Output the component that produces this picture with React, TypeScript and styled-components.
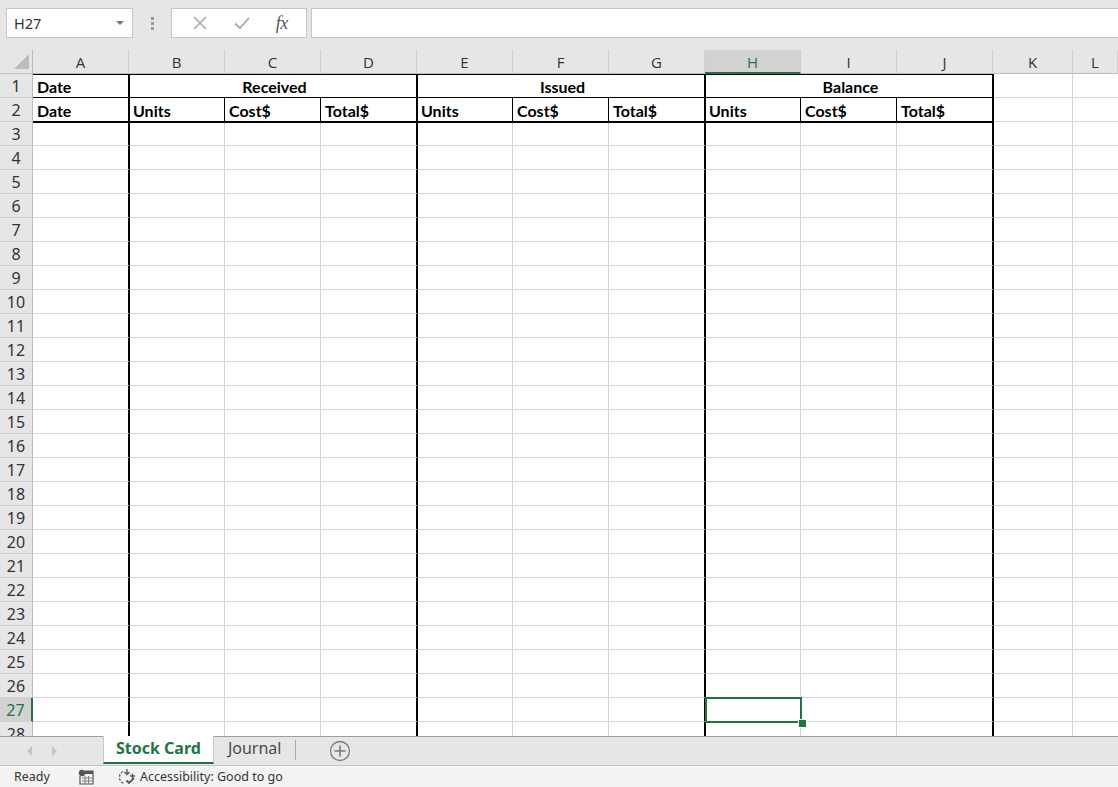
import styled, { createGlobalStyle, css } from "styled-components";

const GlobalStyle = createGlobalStyle`
    html, body {
        margin: 0;
        padding: 0;
        width: 1118px;
        height: 787px;
        overflow: hidden;
        background: #fff;
    }
    * { box-sizing: border-box; }
`;

type Edge = "g" | "b" | "t" | "n";

const edge = (e: Edge) =>
    e === "t" ? "2px solid #000" : e === "b" ? "1px solid #000" : e === "n" ? "none" : "1px solid #d4d4d4";

const COLS = ["A", "B", "C", "D", "E", "F", "G", "H", "I", "J", "K", "L"];
const THICK_AFTER = ["A", "D", "G", "J"];
const ROWS = Array.from({ length: 28 }, (_, i) => i + 1);

const Window = styled.div`
    display: flex;
    flex-direction: column;
    width: 1118px;
    height: 787px;
    font-family: "Noto Sans", "Open Sans", sans-serif;
    color: #222;
`;

const TopBar = styled.div`
    height: 50px;
    flex-shrink: 0;
    background: #e6e6e6;
    display: flex;
    align-items: flex-start;
    padding: 8px 0 0 6px;
`;

const NameBox = styled.div`
    width: 127px;
    height: 30px;
    background: #fff;
    border: 1px solid #c6c6c6;
    display: flex;
    align-items: center;
    justify-content: space-between;
    padding: 0 6px 0 7px;
    font-size: 14.5px;
    color: #333;
`;

const Caret = styled.span`
    width: 0;
    height: 0;
    border-left: 4px solid transparent;
    border-right: 4px solid transparent;
    border-top: 4px solid #777;
    margin-right: 2px;
`;

const Grip = styled.div`
    width: 38px;
    height: 30px;
    display: flex;
    flex-direction: column;
    align-items: center;
    justify-content: center;
    gap: 2px;
    span {
        width: 3px;
        height: 3px;
        background: #9a9a9a;
    }
`;

const ButtonGroup = styled.div`
    width: 136px;
    height: 30px;
    background: #fff;
    border: 1px solid #c6c6c6;
    display: flex;
    align-items: center;
    justify-content: space-around;
    padding: 0 6px 0 8px;
`;

const Fx = styled.span`
    font-family: "Liberation Serif", "DejaVu Serif", serif;
    font-style: italic;
    font-size: 18px;
    color: #555;
    letter-spacing: -0.5px;
`;

const FormulaInput = styled.div`
    flex: 1;
    height: 30px;
    margin-left: 4px;
    background: #fff;
    border: 1px solid #c6c6c6;
    border-right: none;
`;

const Sheet = styled.div`
    flex: 1;
    overflow: hidden;
    display: grid;
    grid-template-columns: 33px repeat(10, 96px) 80px 1fr;
    grid-auto-rows: 24px;
    align-content: start;
    background: #fff;
`;

const Corner = styled.div`
    background: #e6e6e6;
    border-right: 1px solid #bdbdbd;
    border-bottom: 1px solid #bdbdbd;
    display: flex;
    align-items: flex-end;
    justify-content: flex-end;
    padding: 0 3px 4px 0;
`;

const ColHead = styled.div<{ $sel?: boolean }>`
    background: ${(p) => (p.$sel ? "#d2d2d2" : "#e6e6e6")};
    color: ${(p) => (p.$sel ? "#217346" : "#333")};
    border-right: 1px solid #d0d0d0;
    border-bottom: ${(p) => (p.$sel ? "2px solid #217346" : "1px solid #bdbdbd")};
    display: flex;
    align-items: center;
    justify-content: center;
    font-family: "Open Sans", "Noto Sans", sans-serif;
    font-size: 15px;
    padding-top: 1px;
`;

const RowHead = styled.div<{ $sel?: boolean }>`
    background: ${(p) => (p.$sel ? "#d2d2d2" : "#e6e6e6")};
    color: ${(p) => (p.$sel ? "#217346" : "#333")};
    border-bottom: 1px solid #d0d0d0;
    border-right: ${(p) => (p.$sel ? "2px solid #217346" : "1px solid #bdbdbd")};
    display: flex;
    align-items: center;
    justify-content: center;
    font-size: 16px;
    padding-top: 1px;
`;

const Cell = styled.div<{ $r: Edge; $b: Edge; $top?: boolean; $span?: number; $center?: boolean; $sel?: boolean }>`
    position: relative;
    border-right: ${(p) => edge(p.$r)};
    border-bottom: ${(p) => edge(p.$b)};
    ${(p) => p.$r === "t" && css`margin-right: -1px; z-index: 1;`}
    ${(p) => p.$b === "t" && css`margin-bottom: -1px; z-index: 1;`}
    ${(p) => p.$top && css`box-shadow: inset 0 1px 0 #000;`}
    ${(p) => p.$span && css`grid-column: span ${p.$span};`}
    display: flex;
    align-items: center;
    justify-content: ${(p) => (p.$center ? "center" : "flex-start")};
    padding: 1px 0 0 4px;
    font-family: Lato, "Liberation Sans", sans-serif;
    font-weight: 700;
    font-size: 16px;
    color: #000;
    ${(p) =>
        p.$sel &&
        css`
            z-index: 3;
            &::after {
                content: "";
                position: absolute;
                top: -1px;
                left: 0;
                right: -2px;
                bottom: -2px;
                border: 2px solid #217346;
            }
            &::before {
                content: "";
                position: absolute;
                left: 93px;
                top: 21px;
                width: 7px;
                height: 7px;
                background: #217346;
                border: 1px solid #fff;
                z-index: 2;
            }
        `}
`;

const TabBar = styled.div`
    height: 29px;
    flex-shrink: 0;
    background: #e6e6e6;
    border-top: 1px solid #9e9e9e;
    display: flex;
    align-items: stretch;
`;

const Arrows = styled.div`
    width: 103px;
    display: flex;
    align-items: center;
    padding-left: 27px;
    gap: 20px;
`;

const Arrow = styled.span<{ $dir: "l" | "r" }>`
    width: 0;
    height: 0;
    border-top: 5px solid transparent;
    border-bottom: 5px solid transparent;
    ${(p) => (p.$dir === "l" ? "border-right: 5px solid #c4c4c4;" : "border-left: 5px solid #c4c4c4;")}
`;

const Tab = styled.div<{ $active?: boolean }>`
    display: flex;
    align-items: center;
    padding: 0 ${(p) => (p.$active ? "12px" : "14px")} 2px;
    font-size: 16px;
    margin-top: -1px;
    ${(p) =>
        p.$active
            ? css`
                  background: #fff;
                  color: #217346;
                  font-weight: 700;
                  border-bottom: 2px solid #217346;
                  border-left: 1px solid #c8c8c8;
                  border-right: 1px solid #c8c8c8;
                  height: 28px;
              `
            : css`
                  color: #4a4a4a;
                  height: 26px;
              `}
`;

const TabDivider = styled.span`
    width: 1px;
    height: 20px;
    background: #a8a8a8;
    align-self: center;
    margin: 0 0 2px 0;
`;

const AddSheet = styled.div`
    display: flex;
    align-items: center;
    padding: 0 0 0 33px;
`;

const StatusBar = styled.div`
    height: 22px;
    flex-shrink: 0;
    background: #f3f3f3;
    border-top: 1px solid #c6c6c6;
    display: flex;
    align-items: center;
    padding-left: 14px;
    font-size: 12.5px;
    color: #333;
`;

const StatusItem = styled.span<{ $gap?: number }>`
    display: flex;
    align-items: center;
    margin-left: ${(p) => p.$gap ?? 0}px;
    gap: 1px;
`;

const headerRow1 = () => (
    <>
        <Cell $r="t" $b="b" $top>Date</Cell>
        <Cell $r="t" $b="b" $top $span={3} $center>Received</Cell>
        <Cell $r="t" $b="b" $top $span={3} $center>Issued</Cell>
        <Cell $r="t" $b="b" $top $span={3} $center>Balance</Cell>
        <Cell $r="g" $b="g" />
        <Cell $r="n" $b="g" />
    </>
);

const headerRow2 = () => {
    const labels = ["Date", "Units", "Cost$", "Total$", "Units", "Cost$", "Total$", "Units", "Cost$", "Total$"];
    return (
        <>
            {labels.map((l, i) => (
                <Cell key={i} $r={THICK_AFTER.includes(COLS[i]) ? "t" : "b"} $b="t">
                    {l}
                </Cell>
            ))}
            <Cell $r="g" $b="g" />
            <Cell $r="n" $b="g" />
        </>
    );
};

const plainRow = (row: number) =>
    COLS.map((c) => (
        <Cell
            key={c}
            $r={THICK_AFTER.includes(c) ? "t" : c === "L" ? "n" : "g"}
            $b="g"
            $sel={row === 27 && c === "H"}
        />
    ));

const App = () => {
    return (
        <Window>
            <GlobalStyle />
            <TopBar>
                <NameBox>
                    H27
                    <Caret />
                </NameBox>
                <Grip>
                    <span />
                    <span />
                    <span />
                </Grip>
                <ButtonGroup>
                    <svg width="16" height="16" viewBox="0 0 16 16">
                        <path d="M2 2L14 14M14 2L2 14" stroke="#a8a8a8" strokeWidth="1.6" fill="none" />
                    </svg>
                    <svg width="18" height="16" viewBox="0 0 18 16">
                        <path d="M2 8.5L7 13L16 3" stroke="#a8a8a8" strokeWidth="1.8" fill="none" />
                    </svg>
                    <Fx>fx</Fx>
                </ButtonGroup>
                <FormulaInput />
            </TopBar>

            <Sheet>
                <Corner>
                    <svg width="15" height="15" viewBox="0 0 15 15">
                        <path d="M15 0L15 15L0 15Z" fill="#bdbdbd" />
                    </svg>
                </Corner>
                {COLS.map((c) => (
                    <ColHead key={c} $sel={c === "H"}>
                        {c}
                    </ColHead>
                ))}
                {ROWS.map((r) => (
                    <>
                        <RowHead key={"h" + r} $sel={r === 27}>
                            {r}
                        </RowHead>
                        {r === 1 ? headerRow1() : r === 2 ? headerRow2() : plainRow(r)}
                    </>
                ))}
            </Sheet>

            <TabBar>
                <Arrows>
                    <Arrow $dir="l" />
                    <Arrow $dir="r" />
                </Arrows>
                <Tab $active>Stock Card</Tab>
                <Tab>Journal</Tab>
                <TabDivider />
                <AddSheet>
                    <svg width="22" height="22" viewBox="0 0 22 22">
                        <circle cx="11" cy="11" r="9.5" stroke="#7a7a7a" strokeWidth="1.3" fill="none" />
                        <path d="M11 5.5V16.5M5.5 11H16.5" stroke="#7a7a7a" strokeWidth="1.6" />
                    </svg>
                </AddSheet>
            </TabBar>

            <StatusBar>
                <StatusItem>Ready</StatusItem>
                <StatusItem $gap={28}>
                    <svg width="16" height="16" viewBox="0 0 16 16">
                        <circle cx="4" cy="4" r="3.2" fill="#555" />
                        <path d="M7 2H15V15H2V7" stroke="#555" strokeWidth="1.2" fill="none" />
                        <rect x="7" y="2" width="8" height="3" fill="#555" />
                        <path d="M4 9H14M4 12H14M7 7V15M10.5 7V15" stroke="#777" strokeWidth="0.9" />
                    </svg>
                </StatusItem>
                <StatusItem $gap={23}>
                    <svg width="22" height="18" viewBox="0 0 22 18">
                        <path
                            d="M6 3.5A6.5 6.5 0 0 0 7 15.5"
                            stroke="#555"
                            strokeWidth="1.3"
                            fill="none"
                            strokeDasharray="2.5 1.5"
                        />
                        <path d="M10 1V6M7.5 4L10 6.5L12.5 4" stroke="#555" strokeWidth="1.3" fill="none" />
                        <path d="M13 8H18M15.5 5.5V10.5" stroke="#555" strokeWidth="1.3" fill="none" />
                        <path d="M9.5 12.5L12 15L17 10" stroke="#555" strokeWidth="1.8" fill="none" />
                    </svg>
                    Accessibility: Good to go
                </StatusItem>
            </StatusBar>
        </Window>
    );
};

export default App;
